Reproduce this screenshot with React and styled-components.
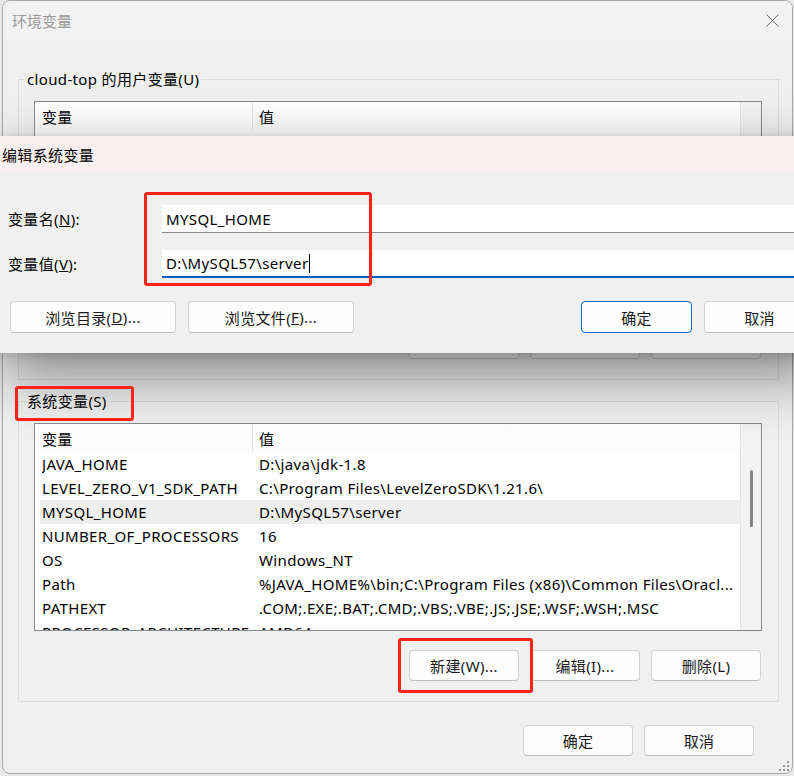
import React from "react";
import styled, { createGlobalStyle } from "styled-components";

const Global = createGlobalStyle`
  html, body { margin: 0; padding: 0; }
  body {
    background: #e4e4e4;
    font-family: "Noto Sans", "Noto Sans CJK SC", sans-serif;
    font-size: 15px;
    letter-spacing: 0.35px;
    color: #000;
  }
  * { box-sizing: border-box; }
`;

const Screen = styled.div`
  position: relative;
  width: 794px;
  height: 776px;
  overflow: hidden;
  background: #e8e8e8;
`;

const Window = styled.div`
  position: relative;
  margin-left: 2px;
  width: 791px;
  height: 774px;
  border: 1px solid #a9a9a9;
  border-radius: 8px;
  background: #f0f0f0;
  display: flex;
  flex-direction: column;
  overflow: hidden;
`;

const TitleBar = styled.div`
  height: 38px;
  flex: none;
  display: flex;
  align-items: center;
  justify-content: space-between;
  padding: 0 13px 0 9px;
  background: #f2f2f2;
`;

const Title = styled.div`
  color: #9a9a9a;
  font-size: 15px;
  letter-spacing: 0;
`;

const Body = styled.div`
  flex: 1;
  display: flex;
  flex-direction: column;
  padding: 30px 13px 0 15px;
`;

const Group = styled.fieldset`
  margin: ${(p) => (p.$first ? "0" : "11px")} 0 0 0;
  padding: 12px 16px 20px 15px;
  border: 1px solid #dcdcdc;
  min-width: 0;
`;

const Legend = styled.legend`
  margin-left: -9px;
  padding: 0 2px;
  line-height: 20px;
  font-size: 15px;
`;

const ListView = styled.div`
  display: flex;
  height: 208px;
  border: 1px solid #868a91;
  background: #fff;
  overflow: hidden;
`;

const ListMain = styled.div`
  flex: 1;
  min-width: 0;
  display: flex;
  flex-direction: column;
`;

const ListHeader = styled.div`
  height: 28px;
  flex: none;
  display: grid;
  grid-template-columns: 218px 1fr;
  align-items: stretch;
  background: linear-gradient(#ffffff, #fbfbfb);
`;

const HeaderCell = styled.div`
  display: flex;
  align-items: center;
  padding-left: ${(p) => (p.$first ? "7px" : "6px")};
  border-right: ${(p) => (p.$first ? "1px solid #e5e5e5" : "none")};
`;

const Rows = styled.div`
  padding-left: 5px;
`;

const Row = styled.div`
  height: 24px;
  display: grid;
  grid-template-columns: 217px 1fr;
  align-items: center;
  padding-left: 2px;
  background: ${(p) => (p.$selected ? "#efefef" : "transparent")};
  white-space: nowrap;
`;

const Cell = styled.div`
  overflow: hidden;
  white-space: nowrap;
`;

const ScrollTrack = styled.div`
  width: 21px;
  flex: none;
  background: #f3f3f3;
  border-left: 1px solid #e6e6e6;
  padding-top: ${(p) => p.$offset}px;
  display: flex;
  justify-content: center;
`;

const ScrollThumb = styled.div`
  width: 3px;
  height: ${(p) => p.$size}px;
  margin-left: 1px;
  border-radius: 2px;
  background: #858585;
`;

const ButtonRow = styled.div`
  display: flex;
  justify-content: flex-end;
  gap: 11px;
  margin-top: 19px;
  padding-right: 1px;
`;

const Button = styled.div`
  width: ${(p) => p.$w || 110}px;
  height: ${(p) => p.$h || 31}px;
  display: flex;
  align-items: center;
  justify-content: center;
  background: #fdfdfd;
  border: 1px solid ${(p) => (p.$focus ? "#0067c0" : "#d2d2d2")};
  border-bottom-color: ${(p) => (p.$focus ? "#0067c0" : "#bfbfbf")};
  border-radius: 4px;
  font-size: 15px;
  color: #1a1a1a;
  flex: none;
`;

const Footer = styled.div`
  display: flex;
  justify-content: flex-end;
  gap: 11px;
  margin-top: 23px;
  padding-right: 25px;
`;

const Grip = styled.svg`
  position: absolute;
  right: 2px;
  bottom: 1px;
`;

/* edit dialog */
const Dialog = styled.div`
  position: absolute;
  left: 0;
  top: 136px;
  width: 830px;
  background: #f0f0f0;
  box-shadow: 0 22px 56px rgba(0, 0, 0, 0.46), 0 2px 10px rgba(0, 0, 0, 0.14);
  display: flex;
  flex-direction: column;
`;

const DialogTitleBar = styled.div`
  height: 37px;
  display: flex;
  align-items: center;
  padding-left: 2px;
  background: #f8eff0;
  font-size: 15px;
`;

const Form = styled.div`
  display: grid;
  grid-template-columns: 162px 1fr;
  grid-auto-rows: 28px;
  row-gap: 17px;
  padding-top: 32px;
`;

const Label = styled.div`
  display: flex;
  align-items: center;
  padding-left: 8px;
  padding-bottom: 1px;
`;

const Input = styled.div`
  display: flex;
  align-items: center;
  padding-left: 4px;
  background: #fff;
  border-bottom: ${(p) => (p.$focus ? "2px solid #005fb8" : "1px solid #8a8a8a")};
`;

const Caret = styled.span`
  display: inline-block;
  width: 1px;
  height: 19px;
  margin-left: 1px;
  background: #000;
  vertical-align: middle;
`;

const DialogButtons = styled.div`
  display: flex;
  align-items: center;
  gap: 12px;
  margin-top: 23px;
  padding: 0 15px 20px 10px;
`;

const Spacer = styled.div`
  flex: 1;
`;

const Mark = styled.div`
  position: absolute;
  border: 3.5px solid #ff2218;
  border-radius: 3px;
  pointer-events: none;
`;

const userRows = [["OneDrive", "C:\\Users\\cloud-top\\OneDrive"]];

const sysRows = [
  ["JAVA_HOME", "D:\\java\\jdk-1.8"],
  ["LEVEL_ZERO_V1_SDK_PATH", "C:\\Program Files\\LevelZeroSDK\\1.21.6\\"],
  ["MYSQL_HOME", "D:\\MySQL57\\server", true],
  ["NUMBER_OF_PROCESSORS", "16"],
  ["OS", "Windows_NT"],
  ["Path", "%JAVA_HOME%\\bin;C:\\Program Files (x86)\\Common Files\\Oracl..."],
  ["PATHEXT", ".COM;.EXE;.BAT;.CMD;.VBS;.VBE;.JS;.JSE;.WSF;.WSH;.MSC"],
  ["PROCESSOR_ARCHITECTURE", "AMD64"],
];

function List({ rows, thumbTop, thumbSize }) {
  return (
    <ListView>
      <ListMain>
        <ListHeader>
          <HeaderCell $first>变量</HeaderCell>
          <HeaderCell>值</HeaderCell>
        </ListHeader>
        <Rows>
          {rows.map(([k, v, sel]) => (
            <Row key={k} $selected={sel}>
              <Cell>{k}</Cell>
              <Cell>{v}</Cell>
            </Row>
          ))}
        </Rows>
      </ListMain>
      <ScrollTrack $offset={thumbTop}>
        {thumbSize ? <ScrollThumb $size={thumbSize} /> : null}
      </ScrollTrack>
    </ListView>
  );
}

export default function App() {
  return (
    <>
      <Global />
      <Screen>
        <Window>
          <TitleBar>
            <Title>环境变量</Title>
            <svg width="13" height="13" viewBox="0 0 13 13">
              <path d="M0.5 0.5 L12.5 12.5 M12.5 0.5 L0.5 12.5" stroke="#6e6e6e" strokeWidth="1" fill="none" />
            </svg>
          </TitleBar>
          <Body>
            <Group $first>
              <Legend>cloud-top 的用户变量(U)</Legend>
              <List rows={userRows} thumbTop={46} thumbSize={57} />
              <ButtonRow>
                <Button>新建(N)...</Button>
                <Button>编辑(E)...</Button>
                <Button>删除(D)</Button>
              </ButtonRow>
            </Group>
            <Group>
              <Legend>系统变量(S)</Legend>
              <List rows={sysRows} thumbTop={46} thumbSize={57} />
              <ButtonRow>
                <Button>新建(W)...</Button>
                <Button>编辑(I)...</Button>
                <Button>删除(L)</Button>
              </ButtonRow>
            </Group>
            <Footer>
              <Button>确定</Button>
              <Button>取消</Button>
            </Footer>
          </Body>
          <Grip width="12" height="12" viewBox="0 0 12 12">
            {[
              [10, 2], [10, 6], [6, 6], [10, 10], [6, 10], [2, 10],
            ].map(([x, y]) => (
              <rect key={`${x}-${y}`} x={x - 1} y={y - 1} width="2" height="2" fill="#9a9a9a" />
            ))}
          </Grip>
        </Window>

        <Dialog>
          <DialogTitleBar>编辑系统变量</DialogTitleBar>
          <Form>
            <Label>变量名(<u>N</u>):</Label>
            <Input>MYSQL_HOME</Input>
            <Label>变量值(<u>V</u>):</Label>
            <Input $focus>
              D:\MySQL57\server<Caret />
            </Input>
          </Form>
          <DialogButtons>
            <Button $w={166} $h={32}>浏览目录(<u>D</u>)...</Button>
            <Button $w={166} $h={32}>浏览文件(<u>F</u>)...</Button>
            <Spacer />
            <Button $w={111} $h={32} $focus>确定</Button>
            <Button $w={111} $h={32}>取消</Button>
          </DialogButtons>
        </Dialog>

        <Mark style={{ left: 144, top: 192, width: 228, height: 94 }} />
        <Mark style={{ left: 15, top: 386, width: 119, height: 35 }} />
        <Mark style={{ left: 398, top: 638, width: 135, height: 55 }} />
      </Screen>
    </>
  );
}
